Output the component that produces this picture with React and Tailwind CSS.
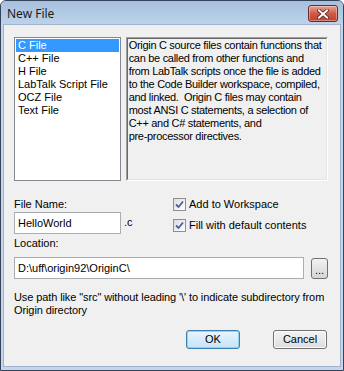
import React, { useState } from 'react';

const files = ['C File', 'C++ File', 'H File', 'LabTalk Script File', 'OCZ File', 'Text File'];

const description = [
  'Origin C source files contain functions that',
  'can be called from other functions and',
  'from LabTalk scripts once the file is added',
  'to the Code Builder workspace, compiled,',
  'and linked.  Origin C files may contain',
  'most ANSI C statements, a selection of',
  'C++ and C# statements, and',
  'pre-processor directives.',
];

const CheckBox = ({ checked, onChange, label }) => (
  <label className="flex items-center h-[13px] cursor-default" onClick={onChange}>
    <span className="w-[13px] h-[13px] border border-[#8e8f8f] bg-gradient-to-br from-[#dcdcdc] to-[#ffffff] flex items-center justify-center">
      {checked && (
        <svg width="9" height="9" viewBox="0 0 9 9">
          <path d="M1 4.5 L3.5 7 L8 1.5" fill="none" stroke="#4a5f97" strokeWidth="1.8" />
        </svg>
      )}
    </span>
    <span className="ml-[3px]">{label}</span>
  </label>
);

const App = () => {
  const [selected, setSelected] = useState(0);
  const [addWs, setAddWs] = useState(true);
  const [fill, setFill] = useState(true);

  return (
    <div
      className="w-[344px] h-[371px] flex flex-col bg-[#c4d6eb] border border-[#34435a] rounded-t-[6px] overflow-hidden text-[11px] leading-[13px] text-black"
      style={{ fontFamily: '"Liberation Sans", Arial, sans-serif' }}
    >
      {/* title bar */}
      <div className="h-[23px] shrink-0 flex items-start justify-between bg-gradient-to-b from-[#a7c0dc] to-[#bcd2ea] pl-[6px] pr-[5px]">
        <span
          className="mt-[5px] text-[12px] leading-[15px] text-[#1b1b1b]"
          style={{ fontFamily: '"Noto Sans", "Open Sans", sans-serif' }}
        >
          New File
        </span>
        <button className="mt-[4px] w-[30px] h-[17px] rounded-[3px] border border-[#6b2a2a] bg-gradient-to-b from-[#e6a595] via-[#cf5a45] to-[#c2412e] flex items-center justify-center shadow-[inset_0_0_0_1px_rgba(255,255,255,0.35)]">
          <svg width="12" height="10" viewBox="0 0 12 10">
            <path d="M2 1.5 L10 8.5 M10 1.5 L2 8.5" stroke="#5a2020" strokeWidth="3.6" strokeLinecap="square" />
            <path d="M2 1.5 L10 8.5 M10 1.5 L2 8.5" stroke="#ffffff" strokeWidth="2" strokeLinecap="square" />
          </svg>
        </button>
      </div>

      {/* client area */}
      <div className="flex-1 mx-[2px] mb-[3px] bg-[#f0f0f0] border border-[#9fb3cb] pl-[10px] pr-[12px] pt-[12px]">
        <div className="flex">
          <div className="w-[107px] h-[144px] bg-white border border-[#828790] p-[1px]">
            {files.map((f, i) => (
              <div
                key={f}
                onClick={() => setSelected(i)}
                className={`h-[13px] pl-[2px] whitespace-nowrap ${i === selected ? 'bg-[#3399ff] text-white' : ''}`}
              >
                {f}
              </div>
            ))}
          </div>
          <div className="ml-[5px] w-[203px] h-[144px] border border-t-[#a0a0a0] border-l-[#a0a0a0] border-r-white border-b-white">
            <div className="w-full h-full border border-t-[#696969] border-l-[#696969] border-r-[#e3e3e3] border-b-[#e3e3e3] pl-[1px] overflow-hidden tracking-[-0.3px]">
              {description.map((l) => (
                <div key={l} className="h-[13px] whitespace-pre">{l}</div>
              ))}
            </div>
          </div>
        </div>

        <div className="flex mt-[17px]">
          <div className="w-[159px] shrink-0">
            <div className="h-[13px]">File Name:</div>
            <div className="flex items-end mt-[1px]">
              <div className="w-[107px] h-[22px] bg-white border border-[#abadb3] border-t-[#a3a7ae] flex items-center pl-[3px]">
                HelloWorld
              </div>
              <span className="ml-[3px] mb-[5px]">.c</span>
            </div>
          </div>
          <div className="flex flex-col gap-[8px]">
            <CheckBox checked={addWs} onChange={() => setAddWs(!addWs)} label="Add to Workspace" />
            <CheckBox checked={fill} onChange={() => setFill(!fill)} label="Fill with default contents" />
          </div>
        </div>

        <div className="h-[13px] mt-[3px]">Location:</div>
        <div className="flex items-start mt-[7px]">
          <div className="w-[290px] h-[22px] bg-white border border-[#abadb3] flex items-center pl-[3px] whitespace-nowrap">
            D:\uff\origin92\OriginC\
          </div>
          <button className="ml-[7px] mt-[1px] w-[17px] h-[21px] rounded-[3px] border border-[#707070] bg-gradient-to-b from-[#f2f2f2] to-[#d5d5d5] flex items-end justify-center pb-[4px] leading-[8px]">
            ...
          </button>
        </div>

        <div className="mt-[12px] whitespace-nowrap tracking-[-0.1px]">
          <div className="h-[13px]">Use path like "src" without leading '\' to indicate subdirectory from</div>
          <div className="h-[13px]">Origin directory</div>
        </div>

        <div className="flex justify-end gap-[33px] mt-[13px] pr-[1px]">
          <button className="w-[54px] h-[19px] rounded-[3px] border border-[#3c7fb1] bg-gradient-to-b from-[#e9f5fc] to-[#c5e4f7] shadow-[inset_0_0_0_1px_#8fd3f5] flex items-center justify-center">
            OK
          </button>
          <button className="w-[54px] h-[19px] rounded-[3px] border border-[#707070] bg-gradient-to-b from-[#f4f4f4] to-[#dcdcdc] shadow-[inset_0_0_0_1px_#fcfcfc] flex items-center justify-center">
            Cancel
          </button>
        </div>
      </div>
    </div>
  );
};

export default App;
